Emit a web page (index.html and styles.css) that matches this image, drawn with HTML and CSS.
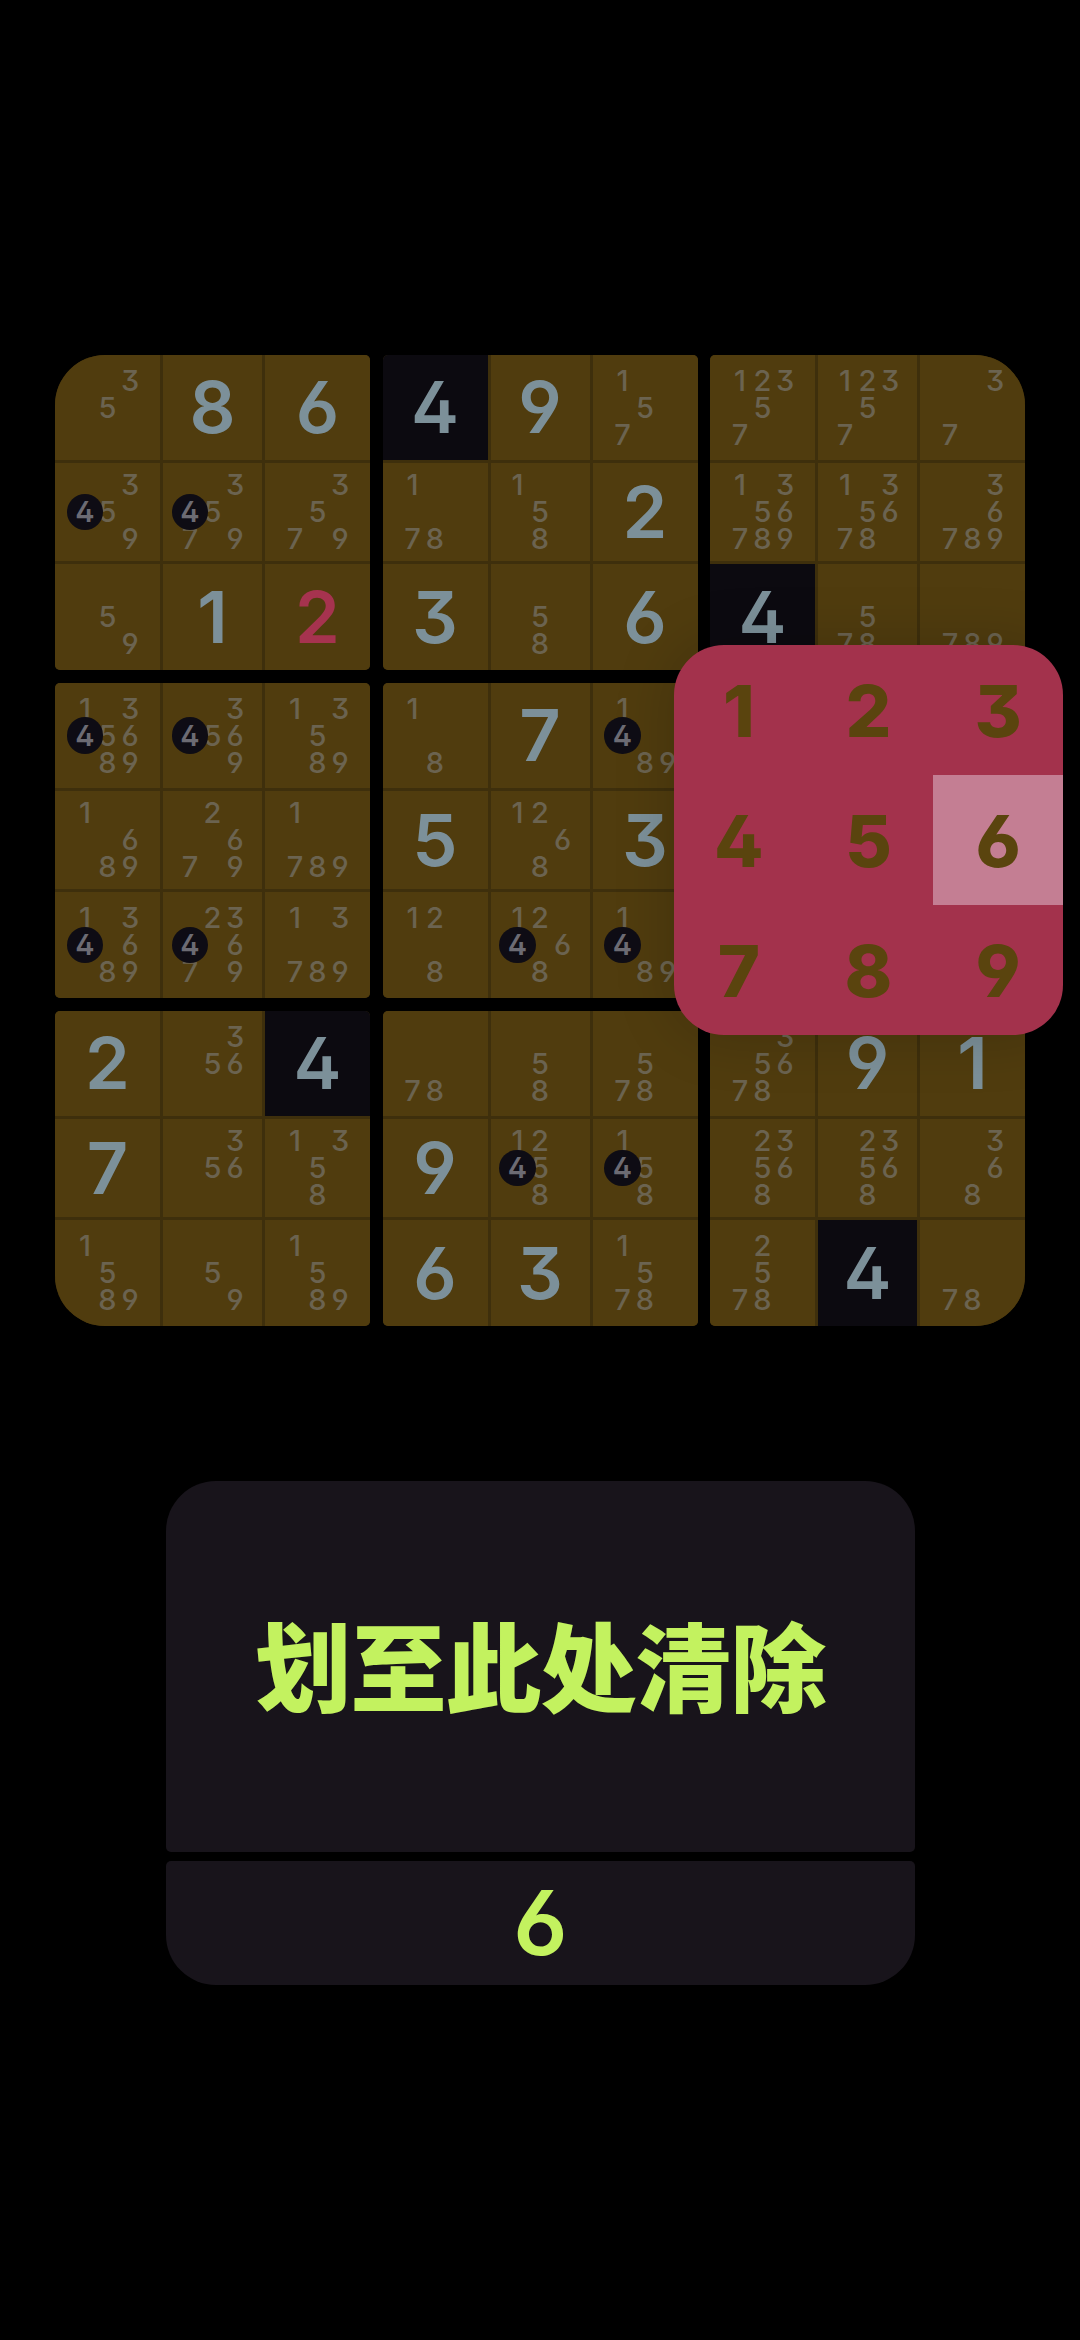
FILE: index.html
```html
<!DOCTYPE html>
<html lang="zh">
<head>
<meta charset="utf-8">
<title>数独</title>
<link rel="stylesheet" href="styles.css">
</head>
<body>
<main class="page">
  <section class="board">
    <div class="box tl">
      <div class="cell pm"><i class="d3">3</i><i class="d5">5</i></div>
      <div class="cell val">8</div>
      <div class="cell val">6</div>
      <div class="cell pm"><i class="d3">3</i><i class="d4 badge">4</i><i class="d5">5</i><i class="d9">9</i></div>
      <div class="cell pm"><i class="d3">3</i><i class="d4 badge">4</i><i class="d5">5</i><i class="d7">7</i><i class="d9">9</i></div>
      <div class="cell pm"><i class="d3">3</i><i class="d5">5</i><i class="d7">7</i><i class="d9">9</i></div>
      <div class="cell pm"><i class="d5">5</i><i class="d9">9</i></div>
      <div class="cell val">1</div>
      <div class="cell val err">2</div>
    </div>
    <div class="box">
      <div class="cell val sel">4</div>
      <div class="cell val">9</div>
      <div class="cell pm"><i class="d1">1</i><i class="d5">5</i><i class="d7">7</i></div>
      <div class="cell pm"><i class="d1">1</i><i class="d7">7</i><i class="d8">8</i></div>
      <div class="cell pm"><i class="d1">1</i><i class="d5">5</i><i class="d8">8</i></div>
      <div class="cell val">2</div>
      <div class="cell val">3</div>
      <div class="cell pm"><i class="d5">5</i><i class="d8">8</i></div>
      <div class="cell val">6</div>
    </div>
    <div class="box tr">
      <div class="cell pm"><i class="d1">1</i><i class="d2">2</i><i class="d3">3</i><i class="d5">5</i><i class="d7">7</i></div>
      <div class="cell pm"><i class="d1">1</i><i class="d2">2</i><i class="d3">3</i><i class="d5">5</i><i class="d7">7</i></div>
      <div class="cell pm"><i class="d3">3</i><i class="d7">7</i></div>
      <div class="cell pm"><i class="d1">1</i><i class="d3">3</i><i class="d5">5</i><i class="d6">6</i><i class="d7">7</i><i class="d8">8</i><i class="d9">9</i></div>
      <div class="cell pm"><i class="d1">1</i><i class="d3">3</i><i class="d5">5</i><i class="d6">6</i><i class="d7">7</i><i class="d8">8</i></div>
      <div class="cell pm"><i class="d3">3</i><i class="d6">6</i><i class="d7">7</i><i class="d8">8</i><i class="d9">9</i></div>
      <div class="cell val sel">4</div>
      <div class="cell pm"><i class="d5">5</i><i class="d7">7</i><i class="d8">8</i></div>
      <div class="cell pm"><i class="d7">7</i><i class="d8">8</i><i class="d9">9</i></div>
    </div>
    <div class="box">
      <div class="cell pm"><i class="d1">1</i><i class="d3">3</i><i class="d4 badge">4</i><i class="d5">5</i><i class="d6">6</i><i class="d8">8</i><i class="d9">9</i></div>
      <div class="cell pm"><i class="d3">3</i><i class="d4 badge">4</i><i class="d5">5</i><i class="d6">6</i><i class="d9">9</i></div>
      <div class="cell pm"><i class="d1">1</i><i class="d3">3</i><i class="d5">5</i><i class="d8">8</i><i class="d9">9</i></div>
      <div class="cell pm"><i class="d1">1</i><i class="d6">6</i><i class="d8">8</i><i class="d9">9</i></div>
      <div class="cell pm"><i class="d2">2</i><i class="d6">6</i><i class="d7">7</i><i class="d9">9</i></div>
      <div class="cell pm"><i class="d1">1</i><i class="d7">7</i><i class="d8">8</i><i class="d9">9</i></div>
      <div class="cell pm"><i class="d1">1</i><i class="d3">3</i><i class="d4 badge">4</i><i class="d6">6</i><i class="d8">8</i><i class="d9">9</i></div>
      <div class="cell pm"><i class="d2">2</i><i class="d3">3</i><i class="d4 badge">4</i><i class="d6">6</i><i class="d7">7</i><i class="d9">9</i></div>
      <div class="cell pm"><i class="d1">1</i><i class="d3">3</i><i class="d7">7</i><i class="d8">8</i><i class="d9">9</i></div>
    </div>
    <div class="box">
      <div class="cell pm"><i class="d1">1</i><i class="d8">8</i></div>
      <div class="cell val">7</div>
      <div class="cell pm"><i class="d1">1</i><i class="d4 badge">4</i><i class="d8">8</i><i class="d9">9</i></div>
      <div class="cell val">5</div>
      <div class="cell pm"><i class="d1">1</i><i class="d2">2</i><i class="d6">6</i><i class="d8">8</i></div>
      <div class="cell val">3</div>
      <div class="cell pm"><i class="d1">1</i><i class="d2">2</i><i class="d8">8</i></div>
      <div class="cell pm"><i class="d1">1</i><i class="d2">2</i><i class="d4 badge">4</i><i class="d6">6</i><i class="d8">8</i></div>
      <div class="cell pm"><i class="d1">1</i><i class="d4 badge">4</i><i class="d8">8</i><i class="d9">9</i></div>
    </div>
    <div class="box">
      <div class="cell"></div><div class="cell"></div><div class="cell"></div>
      <div class="cell"></div><div class="cell"></div><div class="cell"></div>
      <div class="cell"></div><div class="cell"></div><div class="cell"></div>
    </div>
    <div class="box bl">
      <div class="cell val">2</div>
      <div class="cell pm"><i class="d3">3</i><i class="d5">5</i><i class="d6">6</i></div>
      <div class="cell val sel">4</div>
      <div class="cell val">7</div>
      <div class="cell pm"><i class="d3">3</i><i class="d5">5</i><i class="d6">6</i></div>
      <div class="cell pm"><i class="d1">1</i><i class="d3">3</i><i class="d5">5</i><i class="d8">8</i></div>
      <div class="cell pm"><i class="d1">1</i><i class="d5">5</i><i class="d8">8</i><i class="d9">9</i></div>
      <div class="cell pm"><i class="d5">5</i><i class="d9">9</i></div>
      <div class="cell pm"><i class="d1">1</i><i class="d5">5</i><i class="d8">8</i><i class="d9">9</i></div>
    </div>
    <div class="box">
      <div class="cell pm"><i class="d7">7</i><i class="d8">8</i></div>
      <div class="cell pm"><i class="d5">5</i><i class="d8">8</i></div>
      <div class="cell pm"><i class="d5">5</i><i class="d7">7</i><i class="d8">8</i></div>
      <div class="cell val">9</div>
      <div class="cell pm"><i class="d1">1</i><i class="d2">2</i><i class="d4 badge">4</i><i class="d5">5</i><i class="d8">8</i></div>
      <div class="cell pm"><i class="d1">1</i><i class="d4 badge">4</i><i class="d5">5</i><i class="d8">8</i></div>
      <div class="cell val">6</div>
      <div class="cell val">3</div>
      <div class="cell pm"><i class="d1">1</i><i class="d5">5</i><i class="d7">7</i><i class="d8">8</i></div>
    </div>
    <div class="box br">
      <div class="cell pm"><i class="d3">3</i><i class="d5">5</i><i class="d6">6</i><i class="d7">7</i><i class="d8">8</i></div>
      <div class="cell val">9</div>
      <div class="cell val">1</div>
      <div class="cell pm"><i class="d2">2</i><i class="d3">3</i><i class="d5">5</i><i class="d6">6</i><i class="d8">8</i></div>
      <div class="cell pm"><i class="d2">2</i><i class="d3">3</i><i class="d5">5</i><i class="d6">6</i><i class="d8">8</i></div>
      <div class="cell pm"><i class="d3">3</i><i class="d6">6</i><i class="d8">8</i></div>
      <div class="cell pm"><i class="d2">2</i><i class="d5">5</i><i class="d7">7</i><i class="d8">8</i></div>
      <div class="cell val sel">4</div>
      <div class="cell pm"><i class="d7">7</i><i class="d8">8</i></div>
    </div>
    <div class="picker">
      <span>1</span><span>2</span><span>3</span>
      <span>4</span><span>5</span><span class="hot">6</span>
      <span>7</span><span>8</span><span>9</span>
    </div>
  </section>
  <section class="actions">
    <div class="drop">划至此处清除</div>
    <div class="current">6</div>
  </section>
</main>
</body>
</html>
```
FILE: styles.css
```css
* { box-sizing: border-box; }
html, body { margin: 0; height: 2340px; background: #000; overflow: hidden; }
body {
  font-family: "Inter", "Noto Sans CJK SC", sans-serif;
  font-feature-settings: "ss01", "cv03", "cv04";
}
.page { display: flex; flex-direction: column; align-items: flex-start; padding: 355px 0 0 55px; }

.board {
  position: relative;
  display: grid;
  grid-template-columns: repeat(3, 315px);
  column-gap: 12.5px;
  row-gap: 13.5px;
}
.box {
  display: grid;
  grid-template-columns: 105px 99px 105px;
  grid-template-rows: 104.5px 98.5px 105.5px;
  gap: 3px;
  width: 315px;
  height: 314.5px;
  background: #3e2f0c;
  border-radius: 5px;
  overflow: hidden;
}
.box.tl { border-top-left-radius: 50px; }
.box.tr { border-top-right-radius: 50px; }
.box.bl { border-bottom-left-radius: 50px; }
.box.br { border-bottom-right-radius: 50px; }

.cell { background: #503c0e; min-width: 0; }
.val {
  display: flex;
  align-items: center;
  justify-content: center;
  font-size: 72px;
  font-weight: 600;
  line-height: 1;
  color: #7c9099;
}
.val.sel { background: #0c0a10; }
.val.err { color: #a6334f; }

.pm {
  display: grid;
  grid-template-columns: repeat(3, 22.5px);
  grid-template-rows: repeat(3, 27px);
  place-content: center;
  font-size: 29px;
  font-weight: 500;
  color: #6b6350;
}
.pm i {
  display: flex;
  align-items: center;
  justify-content: center;
  font-style: normal;
  line-height: 1;
}
.d1 { grid-area: 1 / 1; } .d2 { grid-area: 1 / 2; } .d3 { grid-area: 1 / 3; }
.d4 { grid-area: 2 / 1; } .d5 { grid-area: 2 / 2; } .d6 { grid-area: 2 / 3; }
.d7 { grid-area: 3 / 1; } .d8 { grid-area: 3 / 2; } .d9 { grid-area: 3 / 3; }

.pm .badge { position: relative; z-index: 1; color: #6c6b73; font-weight: 600; }
.badge::before {
  content: "";
  position: absolute;
  left: 50%;
  top: 50%;
  width: 36.5px;
  height: 36.5px;
  margin: -18.25px 0 0 -18.25px;
  border-radius: 50%;
  background: #0e0c14;
  z-index: -1;
}

.picker {
  position: absolute;
  left: 619px;
  top: 290px;
  display: grid;
  grid-template-columns: repeat(3, 1fr);
  grid-template-rows: repeat(3, 1fr);
  width: 389px;
  height: 390px;
  background: #a3324c;
  border-radius: 50px;
  overflow: hidden;
  box-shadow: 0 0 60px rgba(0, 0, 0, .18);
}
.picker span {
  display: flex;
  align-items: center;
  justify-content: center;
  font-size: 72px;
  font-weight: 800;
  color: #5a440e;
}
.picker .hot { background: #c47e93; }

.actions {
  display: flex;
  flex-direction: column;
  gap: 9px;
  width: 749px;
  margin: 155px 0 0 111px;
}
.drop, .current {
  display: flex;
  align-items: center;
  justify-content: center;
  background: #18141b;
  color: #c3f25f;
}
.drop {
  height: 371px;
  padding-bottom: 6px;
  border-radius: 50px 50px 5px 5px;
  font: 900 96px/1 "Noto Sans CJK SC", sans-serif;
  letter-spacing: -1px;
}
.current {
  height: 124px;
  border-radius: 5px 5px 50px 50px;
  font-size: 90px;
  font-weight: 600;
}
```
